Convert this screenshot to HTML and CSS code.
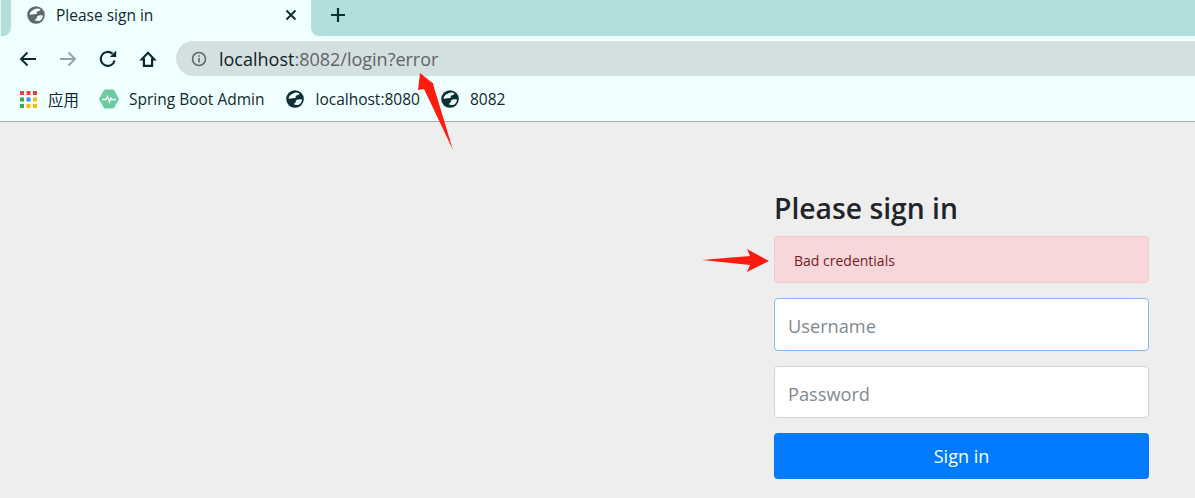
FILE: index.html
```html
<!DOCTYPE html>
<html lang="en">
<head>
    <meta charset="UTF-8">
    <meta name="viewport" content="width=device-width, initial-scale=1.0">
    <title>Please sign in</title>
    <link rel="stylesheet" href="styles.css">
</head>
<body>
    <!-- Browser chrome -->
    <div class="browser">
        <div class="tab-strip">
            <div class="strip-edge"></div>
            <div class="tab">
                <svg class="tab-globe" width="18" height="18" viewBox="0 0 20 20">
                    <circle cx="10" cy="10" r="9.8" fill="#5f6a6c"/>
                    <path d="M9.500 3.200c2-.8 4-.5 5.500.6-.6 1.400-2 2-3.500 2.400-1 .3-1.200 1.500-.2 2-1.500.8-5.500 1.200-8.300 1.500-.3-3 3-5.600 6.500-6.500zM11.500 11c2-.8 4-1 6.300-.3-.3 2.500-1.800 4.800-4.300 6-1.800.3-3.500-.2-5-.8.8-1.500 2.500-1.700 3-4.900z" fill="#f0ffff"/>
                </svg>
                <span class="tab-title">Please sign in</span>
                <svg class="tab-close" width="12" height="12" viewBox="0 0 12 12">
                    <path d="M1.500 1.500l9 9M10.500 1.500l-9 9" stroke="#0e2a2c" stroke-width="1.800" fill="none"/>
                </svg>
            </div>
            <div class="strip-rest">
                <svg width="16" height="16" viewBox="0 0 16 16">
                    <path d="M8 1v14M1 8h14" stroke="#0b3033" stroke-width="2.200" fill="none"/>
                </svg>
            </div>
        </div>

        <div class="toolbar">
            <svg class="nav-icon" width="18" height="16" viewBox="0 0 18 16">
                <path d="M17 8H2M8.500 1.500L2 8l6.500 6.500" stroke="#0b2a2c" stroke-width="1.900" fill="none"/>
            </svg>
            <svg class="nav-icon" width="18" height="16" viewBox="0 0 18 16">
                <path d="M1 8h15M9.500 1.500L16 8l-6.500 6.500" stroke="#8fa5a5" stroke-width="1.900" fill="none"/>
            </svg>
            <svg class="nav-icon" width="18" height="18" viewBox="0 0 18 18">
                <path d="M15.600 10.500A7 7 0 1 1 13.600 3.800" stroke="#0b2a2c" stroke-width="2.100" fill="none"/>
                <path d="M10.800 7h6.400V.6z" fill="#0b2a2c"/>
            </svg>
            <svg class="nav-icon" width="18" height="18" viewBox="0 0 18 18">
                <path d="M9 2.800L2.800 9.300h2.100V15.800h8.200V9.300h2.100z" stroke="#0b2a2c" stroke-width="2.200" fill="none"/>
            </svg>
            <div class="omnibox">
                <svg width="16" height="16" viewBox="0 0 16 16">
                    <circle cx="8" cy="8" r="6.500" stroke="#5f6566" stroke-width="1.500" fill="none"/>
                    <path d="M8 7v4.500M8 4.200v1.500" stroke="#5f6566" stroke-width="1.600" fill="none"/>
                </svg>
                <span class="url"><span class="url-host">localhost</span>:8082/login?error</span>
            </div>
        </div>

        <div class="bookmarks">
            <div class="bookmark">
                <svg width="17" height="17" viewBox="0 0 17 17">
                    <rect x="0" y="0" width="4" height="4" fill="#ea4335"/>
                    <rect x="6.500" y="0" width="4" height="4" fill="#ea4335"/>
                    <rect x="13" y="0" width="4" height="4" fill="#ea4335"/>
                    <rect x="0" y="6.500" width="4" height="4" fill="#34a853"/>
                    <rect x="6.500" y="6.500" width="4" height="4" fill="#4285f4"/>
                    <rect x="13" y="6.500" width="4" height="4" fill="#fbbc04"/>
                    <rect x="0" y="13" width="4" height="4" fill="#34a853"/>
                    <rect x="6.500" y="13" width="4" height="4" fill="#fbbc04"/>
                    <rect x="13" y="13" width="4" height="4" fill="#fbbc04"/>
                </svg>
                <span>应用</span>
            </div>
            <div class="bookmark bookmark-admin">
                <svg width="20" height="20" viewBox="0 0 20 20">
                    <path d="M5.500 1h9l5 9-5 9h-9l-5-9z" fill="#6dcb9f" stroke="#6dcb9f" stroke-linejoin="round"/>
                    <path d="M3 10.500h4l1.500-3 2 5.500 1.500-4 1 1.500h4" stroke="#f0ffff" stroke-width="1.300" fill="none"/>
                </svg>
                <span>Spring Boot Admin</span>
            </div>
            <div class="bookmark">
                <svg width="18" height="18" viewBox="0 0 20 20">
                    <circle cx="10" cy="10" r="9.800" fill="#0b3033"/>
                    <path d="M9.500 3.200c2-.8 4-.5 5.500.6-.6 1.400-2 2-3.500 2.400-1 .3-1.200 1.500-.2 2-1.500.8-5.500 1.200-8.300 1.500-.3-3 3-5.600 6.500-6.500zM11.500 11c2-.8 4-1 6.300-.3-.3 2.500-1.800 4.800-4.300 6-1.800.3-3.500-.2-5-.8.8-1.500 2.500-1.700 3-4.900z" fill="#f0ffff"/>
                </svg>
                <span>localhost:8080</span>
            </div>
            <div class="bookmark">
                <svg width="18" height="18" viewBox="0 0 20 20">
                    <circle cx="10" cy="10" r="9.800" fill="#0b3033"/>
                    <path d="M9.500 3.200c2-.8 4-.5 5.500.6-.6 1.400-2 2-3.500 2.400-1 .3-1.200 1.500-.2 2-1.500.8-5.500 1.200-8.300 1.500-.3-3 3-5.600 6.500-6.500zM11.500 11c2-.8 4-1 6.300-.3-.3 2.500-1.800 4.800-4.300 6-1.800.3-3.500-.2-5-.8.8-1.500 2.500-1.700 3-4.900z" fill="#f0ffff"/>
                </svg>
                <span>8082</span>
            </div>
        </div>
    </div>

    <!-- Login form -->
    <main class="page">
        <form class="signin">
            <h2>Please sign in</h2>
            <div class="alert">Bad credentials</div>
            <input class="field field-focus" type="text" placeholder="Username">
            <input class="field field-password" type="password" placeholder="Password">
            <button type="button">Sign in</button>
        </form>
    </main>

    <!-- Red annotation arrows drawn over the screenshot -->
    <svg class="arrows" width="1195" height="498" viewBox="0 0 1195 498">
        <polygon points="420,73 435,85 433,84 453,150 424,89 418,90" fill="#fe1c0e"/>
        <polygon points="702,260 750,256 747,249 769,261 747,272 750,265" fill="#fe1c0e"/>
    </svg>
</body>
</html>
```

FILE: styles.css
```css
/* Base Reset */
body, html {
    margin: 0;
    padding: 0;
    height: 498px;
    overflow: hidden;
    background-color: #eeeeee;
    font-family: "Open Sans", "Noto Sans CJK SC", sans-serif;
}
* {
    box-sizing: border-box;
}

/* Browser chrome */
.browser {
    background-color: #f0ffff;
    color: #0e2a2c;
    border-bottom: 1px solid #a9adad;
    height: 122px;
}

.tab-strip {
    display: flex;
    height: 36px;
}

.strip-edge {
    width: 11px;
    background-color: #b2dfdc;
    border-bottom-right-radius: 8px;
    border-left: 1px solid #e4f6f5;
}

.tab {
    width: 300px;
    display: flex;
    align-items: center;
    padding: 0 14px 6px 16px;
    font-size: 15.5px;
}

.tab-title {
    flex: 1;
    margin-left: 11px;
}

.strip-rest {
    flex: 1;
    display: flex;
    align-items: center;
    padding: 0 0 7px 19px;
    background-color: #b2dfdc;
    border-bottom-left-radius: 8px;
}

.toolbar {
    display: flex;
    align-items: center;
    height: 45px;
    padding: 0 0 0 19px;
}

.nav-icon {
    margin-right: 22px;
}

.omnibox {
    flex: 1;
    display: flex;
    align-items: center;
    gap: 12px;
    height: 35px;
    margin-left: -3px;
    padding-left: 15px;
    background-color: #d4dfdf;
    border-radius: 18px 0 0 18px;
    font-size: 18px;
    color: #5f6566;
}

.url-host {
    color: #0e2226;
}

.bookmarks {
    display: flex;
    align-items: center;
    height: 40px;
    padding: 0 0 4px 20px;
    font-size: 15.5px;
}

.bookmark {
    display: flex;
    align-items: center;
    gap: 11px;
    margin-right: 21px;
}

.bookmark-admin {
    gap: 10px;
    margin-left: -1px;
    margin-right: 22px;
}

/* Login form */
.page {
    display: flex;
    justify-content: flex-end;
    padding: 0 46px 0 0;
}

.signin {
    width: 375px;
    padding-top: 66px;
}

h2 {
    margin: 0 0 8px 0;
    font-size: 28.3px;
    line-height: 40px;
    font-weight: 600;
    color: #212529;
}

.alert {
    height: 47px;
    padding: 0 19px;
    line-height: 47px;
    font-size: 14px;
    color: #721c24;
    background-color: #f8d7da;
    border: 1px solid #f5c6cb;
    border-radius: 4px;
    margin-bottom: 15px;
}

.field {
    display: block;
    width: 100%;
    height: 52px;
    padding: 2px 13px 0;
    margin-bottom: 15px;
    font-family: inherit;
    font-size: 18.2px;
    background: #fff;
    border: 1px solid #ced4da;
    border-radius: 4px;
    outline: none;
}

.field-focus {
    height: 53px;
    border-color: #80bdff;
}

.field-password {
    padding-top: 4px;
}

.field::placeholder {
    color: #6c757d;
    opacity: 0.85;
}

button {
    display: block;
    width: 100%;
    height: 46px;
    font-family: inherit;
    font-size: 18px;
    color: #fff;
    background-color: #007bff;
    border: none;
    border-radius: 4px;
}

/* Annotations */
.arrows {
    position: absolute;
    left: 0;
    top: 0;
    pointer-events: none;
}
```
